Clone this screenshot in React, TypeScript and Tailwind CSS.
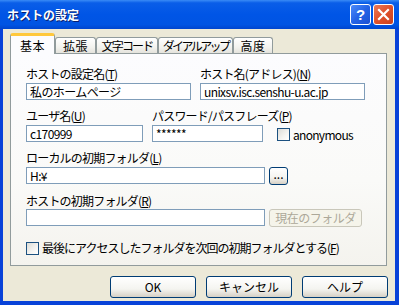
import type { ReactNode } from 'react'

const font = { fontFamily: '"Noto Sans CJK JP", "MS UI Gothic", sans-serif' }

function Label({ children, className = '' }: { children: ReactNode; className?: string }) {
  return (
    <div className={`h-[14px] text-[12px] leading-[14px] tracking-[-0.8px] text-black whitespace-nowrap ${className}`}>
      {children}
    </div>
  )
}

function Field({ value, className = '' }: { value?: string; className?: string }) {
  return (
    <div
      className={`h-[17px] border border-[#7F9DB9] bg-white px-[3px] text-[12px] leading-[15px] tracking-[-0.6px] text-black whitespace-nowrap overflow-hidden ${className}`}
    >
      {value}
    </div>
  )
}

function CheckBox() {
  return (
    <div className="w-[13px] h-[13px] shrink-0 border border-[#1C5180] bg-[linear-gradient(135deg,#DCDCD7_0%,#F5F4F1_60%,#FFFFFF_100%)]" />
  )
}

function Button({ children, disabled = false, className = '' }: { children: ReactNode; disabled?: boolean; className?: string }) {
  return (
    <div
      className={`flex items-center justify-center rounded-[3px] border text-[12px] leading-none whitespace-nowrap ${
        disabled
          ? 'border-[#C9C7BA] bg-[#F5F4EA] text-[#ACA899]'
          : 'border-[#003C74] bg-[linear-gradient(to_bottom,#FFFFFF_0%,#F4F4F0_60%,#D6D0C5_100%)] text-black'
      } ${className}`}
    >
      {children}
    </div>
  )
}

function Tab({ children, w, active = false, track = 'tracking-[0.5px]' }: { children: ReactNode; w: string; active?: boolean; track?: string }) {
  if (active) {
    return (
      <div
        className={`${w} h-[21px] flex items-start justify-center pt-[3px] rounded-t-[3px] border-x border-[#919B9C] border-t-[3px] border-t-[#FFC83C] bg-[#FCFCFE] text-[12px] leading-[14px] text-black ${track}`}
      >
        {children}
      </div>
    )
  }
  return (
    <div
      className={`${w} h-[16px] mb-px flex items-center justify-center rounded-t-[3px] border border-b-0 border-[#919B9C] bg-[linear-gradient(to_bottom,#FFFFFF_0%,#F3F3EF_60%,#E4E3DC_100%)] text-[12px] leading-[14px] text-black whitespace-nowrap overflow-hidden ${track}`}
    >
      {children}
    </div>
  )
}

export default function App() {
  return (
    <div className="w-[399px] h-[305px] flex flex-col bg-[#0842D8] select-none" style={font}>
      {/* Title bar */}
      <div className="h-[29px] shrink-0 flex items-center pl-[7px] pr-[5px] bg-[linear-gradient(to_bottom,#3A8BF6_0%,#0A5EE8_10%,#0055E6_50%,#0054E3_85%,#0045CE_100%)]">
        <div className="flex-1 text-[12px] font-bold text-white leading-none [text-shadow:1px_1px_0_#0A1E6E]">ホストの設定</div>
        <div className="flex gap-[2px]">
          <div
            className="w-[21px] h-[21px] rounded-[3px] border border-white bg-[linear-gradient(135deg,#4C8BFA_0%,#2463E6_50%,#1C50D2_100%)] flex items-center justify-center text-white font-bold text-[15px] leading-none"
            style={{ fontFamily: '"Liberation Sans", sans-serif' }}
          >
            ?
          </div>
          <div className="w-[21px] h-[21px] rounded-[3px] border border-white bg-[linear-gradient(135deg,#E97A5A_0%,#E0512B_50%,#C9401E_100%)] flex items-center justify-center">
            <svg width="13" height="13" viewBox="0 0 13 13">
              <path d="M2 2 L11 11 M11 2 L2 11" stroke="white" strokeWidth="2.2" strokeLinecap="square" />
            </svg>
          </div>
        </div>
      </div>

      {/* Body */}
      <div className="flex-1 ml-[3px] mr-[4px] mb-[4px] bg-[#ECE9D8] flex flex-col pt-[4px]">
        {/* Tabs */}
        <div className="relative z-10 -mb-px flex items-end pl-[7px] h-[21px]">
          <Tab w="w-[45px]" active>基本</Tab>
          <Tab w="w-[41px]">拡張</Tab>
          <Tab w="w-[62px]" track="tracking-[-1.8px]">文字コード</Tab>
          <Tab w="w-[75px]" track="tracking-[-2.6px]">ダイアルアップ</Tab>
          <Tab w="w-[40px]">高度</Tab>
        </div>

        {/* Panel */}
        <div className="ml-[7px] w-[377px] h-[213px] border border-[#919B9C] bg-[linear-gradient(to_bottom,#FCFCFE_0%,#FAFAF8_60%,#F4F3EE_100%)] pl-[15px] pt-[13px] flex flex-col">
          <div className="flex gap-[9px]">
            <div className="w-[165px] flex flex-col gap-[2px]">
              <Label>ホストの設定名(<span className="underline">T</span>)</Label>
              <Field value="私のホームページ" className="w-[165px]" />
            </div>
            <div className="w-[165px] flex flex-col gap-[2px]">
              <Label>ホスト名(アドレス)(<span className="underline">N</span>)</Label>
              <Field value="unixsv.isc.senshu-u.ac.jp" className="w-[165px]" />
            </div>
          </div>

          <div className="flex gap-[9px] mt-[9px]">
            <div className="w-[117px] flex flex-col gap-[2px]">
              <Label>ユーザ名(<span className="underline">U</span>)</Label>
              <Field value="c170999" className="w-[117px]" />
            </div>
            <div className="w-[111px] flex flex-col gap-[2px]">
              <Label>パスワード/パスフレーズ(<span className="underline">P</span>)</Label>
              <Field value="******" className="w-[111px]" />
            </div>
            <div className="flex items-end gap-[3px] ml-[5px] pb-[1px]">
              <CheckBox />
              <span className="text-[12px] leading-[13px] tracking-[-0.7px] text-black">anonymous</span>
            </div>
          </div>

          <div className="flex flex-col gap-[2px] mt-[9px]">
            <Label>ローカルの初期フォルダ(<span className="underline">L</span>)</Label>
            <div className="flex gap-[4px]">
              <Field value="H:¥" className="w-[239px]" />
              <Button className="w-[19px] h-[18px] pb-[4px]">...</Button>
            </div>
          </div>

          <div className="flex flex-col gap-[1px] mt-[9px]">
            <Label>ホストの初期フォルダ(<span className="underline">R</span>)</Label>
            <div className="flex gap-[4px]">
              <Field className="w-[239px]" />
              <Button disabled className="w-[93px] h-[18px] tracking-[-0.5px]">現在のフォルダ</Button>
            </div>
          </div>

          <div className="flex items-center gap-[3px] mt-[14px]">
            <CheckBox />
            <span className="text-[12px] leading-[14px] tracking-[-1px] text-black whitespace-nowrap">
              最後にアクセスしたフォルダを次回の初期フォルダとする(<span className="underline">F</span>)
            </span>
          </div>
        </div>

        {/* Buttons */}
        <div className="flex justify-end gap-[10px] mt-[10px] pr-[7px]">
          <Button className="w-[86px] h-[22px]">OK</Button>
          <Button className="w-[86px] h-[22px]">キャンセル</Button>
          <Button className="w-[86px] h-[22px]">ヘルプ</Button>
        </div>
      </div>
    </div>
  )
}
